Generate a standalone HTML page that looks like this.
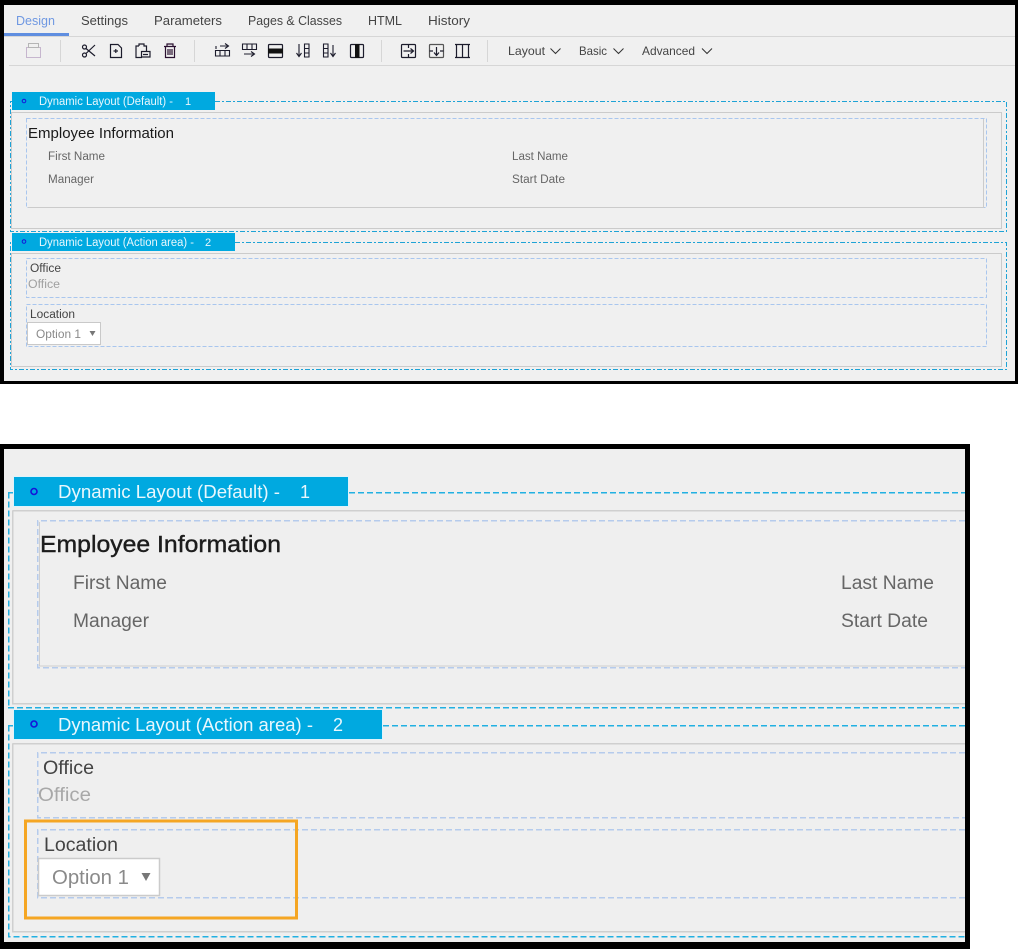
<!DOCTYPE html>
<html lang="en"><head><meta charset="utf-8"><title>Dynamic Layout</title>
<style>
html,body{margin:0;padding:0;background:#fff;width:1018px;height:949px;overflow:hidden}
svg{display:block;position:absolute;left:0;top:0}
text{font-family:"Liberation Sans",sans-serif;fill:#444}
.i{fill:none;stroke:#1c1c2c;stroke-width:1.2}
.l{fill:none;shape-rendering:crispEdges}
.g{stroke:#cbcbcb}
.d{stroke:#1ea3d6;stroke-dasharray:5 2 2 2}
.b{stroke:#a9c6ee;stroke-dasharray:4 2}
.D{stroke:#22b0e2;stroke-dasharray:6 3;stroke-width:1.5}
.B{stroke:#b5cbec;stroke-dasharray:6 3;stroke-width:1.5}
</style></head><body>
<svg width="1018" height="949" viewBox="0 0 1018 949">
<!-- TOP PANEL -->
<rect x="0" y="0" width="1018" height="384" fill="#000"/>
<rect x="4" y="5" width="1011" height="376" fill="#f0f0f0"/>
<g font-size="13">
<text x="16" y="25" textLength="39" lengthAdjust="spacingAndGlyphs" style="fill:#6f98e2">Design</text>
<text x="81" y="25" textLength="47" lengthAdjust="spacingAndGlyphs">Settings</text>
<text x="154" y="25" textLength="68" lengthAdjust="spacingAndGlyphs">Parameters</text>
<text x="248" y="25" textLength="94" lengthAdjust="spacingAndGlyphs">Pages &amp; Classes</text>
<text x="368" y="25" textLength="34" lengthAdjust="spacingAndGlyphs">HTML</text>
<text x="428" y="25" textLength="42" lengthAdjust="spacingAndGlyphs">History</text>
</g>
<path class="l g" d="M4 36.5H1015M9 65.5H1015M60.5 40V62M194.5 40V62M381.5 40V62M487.5 40V62" style="stroke:#d6d6d6"/>
<rect x="4" y="33" width="65" height="3" fill="#5f8ee0"/>
<!-- toolbar icons -->
<rect x="26.5" y="47.5" width="14" height="10" fill="none" stroke="#9d7dab" stroke-dasharray="1 1" shape-rendering="crispEdges"/>
<rect x="28.5" y="43.5" width="10" height="4" fill="none" stroke="#b5b5b5" shape-rendering="crispEdges"/>
<g class="i">
<circle cx="84.5" cy="47" r="2"/><circle cx="84.5" cy="55" r="2"/><path d="M86 48.5L95 56M86 53.5L95 45"/>
<path d="M110.5 44.5H118L121.5 48V57.5H110.5ZM113.5 51H118M115.8 49V53"/>
<path d="M139 46H136V57.5H142M139 46V44H144V46H146.5V51M141.5 51.5H150V57H141.5ZM143 54.5H148"/>
<path d="M164 46.5H176M167 46V44H173V46M165.5 47V57.5H174.5V47M168 49V55M170 49V55M172 49V55" stroke="#2a1030"/>
<path d="M220 46H228M225 43.5L228.5 46L225 48.5M216 46V49M215.5 50.5H229.5V56H215.5ZM220 50.5V56M225 50.5V56" stroke-width="1.1"/>
<path d="M242.5 44H256.5V49.5H242.5ZM247 44V49.5M252 44V49.5M244 54H254M251 51.5L254.5 54L251 56.5" stroke-width="1.1"/>
<rect x="268.5" y="44.5" width="14" height="13" rx="1"/><rect x="268" y="48.5" width="15" height="5" fill="#111" stroke="none"/>
<path d="M299 44V56M296.5 53L299 56.5L301.5 53M304.5 44H309V57H304.5ZM304.5 48.5H309M304.5 53H309" stroke-width="1.1"/>
<path d="M323.5 44H328V57H323.5ZM323.5 48.5H328M323.5 53H328M333 45V56M330.5 53L333 56.5L335.5 53" stroke-width="1.1"/>
<rect x="350.5" y="44.5" width="13" height="13" rx="1"/><rect x="355" y="44" width="4.5" height="14" fill="#111" stroke="none"/>
<rect x="401.5" y="44.5" width="14" height="13" rx="1"/><path d="M408.5 44.5V48M408.5 54V57.5M403.5 51H413M410.5 48.5L413.5 51L410.5 53.5"/>
<rect x="429.5" y="44.5" width="14" height="13" rx="1" stroke="#555"/><path d="M429.5 51H433M440 51H443.5M436.5 47V55M434 52.5L436.5 55.5L439 52.5"/>
<path d="M455 44.5H470M455 57.5H470M456.5 44.5V57.5M462.5 44.5V57.5M468.5 44.5V57.5"/>
</g>
<g font-size="12">
<text x="508" y="55" textLength="37" lengthAdjust="spacingAndGlyphs">Layout</text>
<text x="579" y="55" textLength="28" lengthAdjust="spacingAndGlyphs">Basic</text>
<text x="642" y="55" textLength="53" lengthAdjust="spacingAndGlyphs">Advanced</text>
</g>
<path class="i" d="M550.5 48.5L555.5 53.5L560.5 48.5M613.5 48.5L618.5 53.5L623.5 48.5M702 48.5L707 53.5L712 48.5" style="stroke:#333;stroke-width:1"/>

<!-- top panel layouts -->
<path class="l d" d="M215 101.5H1006.5V231.5H10.5V101.5H12"/>
<rect x="11.5" y="112.5" width="990" height="116" class="l g"/>
<rect x="26.5" y="118.5" width="960" height="89" class="l b"/>
<path class="l g" d="M983.5 119V207.5H28"/>
<rect x="12" y="92" width="203" height="18" fill="#00a9e0"/>
<circle cx="24" cy="101" r="1.8" fill="none" stroke="#1515d8"/>
<text x="39" y="105" font-size="11.5" textLength="134" lengthAdjust="spacingAndGlyphs" style="fill:#e8f7fd">Dynamic Layout (Default) -</text>
<text x="185" y="105" font-size="11" style="fill:#e8f7fd">1</text>
<text x="28" y="138" font-size="14.5" textLength="146" lengthAdjust="spacingAndGlyphs" style="fill:#1a1a1a">Employee Information</text>
<g font-size="11.5">
<text x="48" y="160" textLength="57" lengthAdjust="spacingAndGlyphs" style="fill:#666">First Name</text>
<text x="512" y="160" textLength="56" lengthAdjust="spacingAndGlyphs" style="fill:#666">Last Name</text>
<text x="48" y="183" textLength="46" lengthAdjust="spacingAndGlyphs" style="fill:#666">Manager</text>
<text x="512" y="183" textLength="53" lengthAdjust="spacingAndGlyphs" style="fill:#666">Start Date</text>
</g>
<path class="l d" d="M235 242.5H1006.5V369.5H10.5V242.5H12"/>
<rect x="11.5" y="253.5" width="990" height="113" class="l g"/>
<rect x="26.5" y="258.5" width="960" height="39" class="l b"/>
<rect x="26.5" y="304.5" width="960" height="42" class="l b"/>
<rect x="12" y="233" width="223" height="18" fill="#00a9e0"/>
<circle cx="24" cy="241.5" r="1.8" fill="none" stroke="#1515d8"/>
<text x="39" y="246" font-size="11.5" textLength="155" lengthAdjust="spacingAndGlyphs" style="fill:#e8f7fd">Dynamic Layout (Action area) -</text>
<text x="205" y="246" font-size="11" style="fill:#e8f7fd">2</text>
<text x="30" y="272" font-size="11.5" textLength="31" lengthAdjust="spacingAndGlyphs">Office</text>
<text x="28" y="288" font-size="11.5" textLength="32" lengthAdjust="spacingAndGlyphs" style="fill:#a0a0a0">Office</text>
<text x="30" y="318" font-size="11.5" textLength="45" lengthAdjust="spacingAndGlyphs">Location</text>
<rect x="27.5" y="322.5" width="73" height="22" fill="#fff" stroke="#c9c9c9" shape-rendering="crispEdges"/>
<text x="36" y="338" font-size="12" textLength="45" lengthAdjust="spacingAndGlyphs" style="fill:#8a8a8a">Option 1</text>
<path d="M89.5 331H95.5L92.5 336Z" fill="#777"/>

<!-- BOTTOM PANEL -->
<rect x="0" y="444" width="970" height="505" fill="#000"/>
<rect x="4" y="449" width="961" height="493" fill="#efefef"/>
<path class="l D" d="M349 492.5H965M8.5 492.5V707M8 707.5H965M383 725.5H965M8.5 725.5V936.5H965M8 725.5H13M8 492.5H13"/>
<path class="l g" d="M12.5 510.5H965M12.5 510.5V703.5H965M12.5 743.5H965M12.5 743.5V931.5H965" style="stroke:#cfcfcf;stroke-width:1.5"/>
<path class="l B" d="M965 520.5H37.5V667.5H965"/>
<path class="l g" d="M39.5 522V666H965" style="stroke:#cfcfcf"/>
<path class="l B" d="M965 752.5H37.5V817.5H965M965 829.5H37.5V897.5H965"/>
<rect x="13.5" y="476.5" width="335" height="30" fill="#00a9e0" stroke="#dff3fb"/>
<circle cx="34" cy="491.5" r="3" fill="none" stroke="#1515d8" stroke-width="1.6"/>
<text x="58" y="498" font-size="18" textLength="222" lengthAdjust="spacingAndGlyphs" style="fill:#e8f7fd">Dynamic Layout (Default) -</text>
<text x="300" y="498" font-size="18" style="fill:#e8f7fd">1</text>
<rect x="13.5" y="709.5" width="369" height="30" fill="#00a9e0" stroke="#dff3fb"/>
<circle cx="34" cy="724" r="3" fill="none" stroke="#1515d8" stroke-width="1.6"/>
<text x="58" y="731" font-size="18" textLength="255" lengthAdjust="spacingAndGlyphs" style="fill:#e8f7fd">Dynamic Layout (Action area) -</text>
<text x="333" y="731" font-size="18" style="fill:#e8f7fd">2</text>
<text x="40" y="552" font-size="23" textLength="241" lengthAdjust="spacingAndGlyphs" style="fill:#1c1c1c;stroke:#1c1c1c;stroke-width:.4">Employee Information</text>
<g font-size="19">
<text x="73" y="589" textLength="94" lengthAdjust="spacingAndGlyphs" style="fill:#666">First Name</text>
<text x="841" y="589" textLength="93" lengthAdjust="spacingAndGlyphs" style="fill:#666">Last Name</text>
<text x="73" y="627" textLength="76" lengthAdjust="spacingAndGlyphs" style="fill:#666">Manager</text>
<text x="841" y="627" textLength="87" lengthAdjust="spacingAndGlyphs" style="fill:#666">Start Date</text>
<text x="43" y="774" textLength="51" lengthAdjust="spacingAndGlyphs">Office</text>
<text x="38" y="801" textLength="53" lengthAdjust="spacingAndGlyphs" style="fill:#a8a8a8">Office</text>
<text x="44" y="851" textLength="74" lengthAdjust="spacingAndGlyphs">Location</text>
</g>
<rect x="38.5" y="858.5" width="121" height="37" fill="#fff" stroke="#cbcbcb" stroke-width="1.5"/>
<text x="52" y="884" font-size="20" textLength="77" lengthAdjust="spacingAndGlyphs" style="fill:#8a8a8a">Option 1</text>
<path d="M141.5 873H150.5L146 881Z" fill="#777"/>
<rect x="25.5" y="821" width="271" height="97" fill="none" stroke="#f5a623" stroke-width="3"/>
</svg>
</body></html>
